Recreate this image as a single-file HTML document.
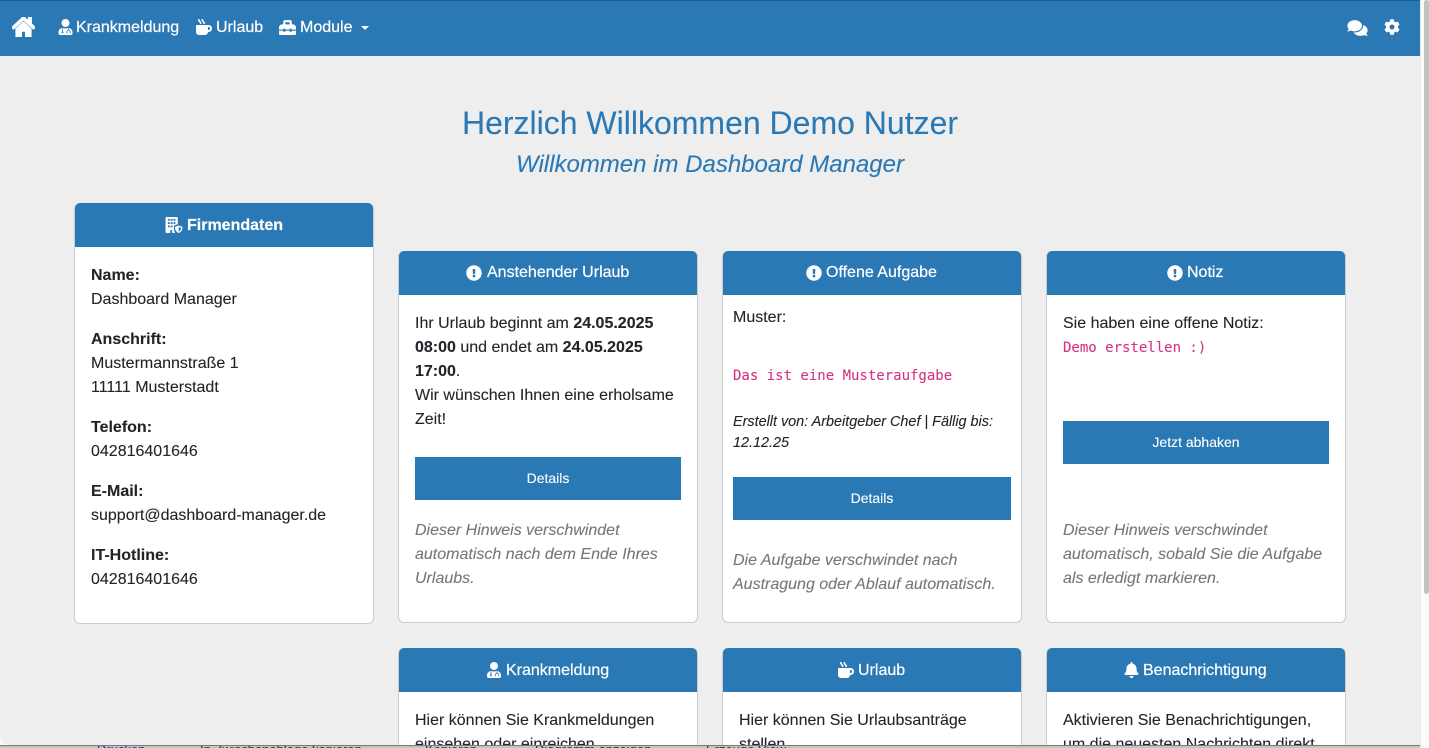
<!DOCTYPE html>
<html lang="de"><head><meta charset="utf-8"><title>Dashboard Manager</title>
<style>
*{box-sizing:border-box}
html,body{margin:0;padding:0;width:1429px;height:748px;overflow:hidden;background:#fafafa}
body{font-family:"Liberation Sans",sans-serif;font-size:16px;line-height:24px;color:#212529;position:relative;-webkit-text-stroke:.1px}
svg{fill:currentColor;display:block;position:absolute}
.win{position:absolute;left:0;top:0;width:1420px;height:745px;background:#eee;overflow:hidden;border-bottom-left-radius:10px}
.nav{position:absolute;left:0;top:0;width:1420px;height:56px;background:#2a79b5;border-top:1px solid #1a5f96;color:#fff;-webkit-text-stroke:.2px}
.nav span{position:absolute;top:15px;white-space:nowrap}
.nav svg{color:#fff}
h1,h2{position:absolute;left:0;width:1420px;text-align:center;color:#2a79b5;font-weight:400;margin:0}
h1{top:101px;font-size:32px;line-height:44px}
h2{top:150px;font-size:24px;line-height:30px;font-style:italic}
.card{position:absolute;width:300px;background:#fff;border:1px solid #ccc;border-radius:6px}
.hd{position:absolute;left:0;top:-1px;width:298px;height:44px;background:#2a79b5;color:#fff;text-align:center;line-height:44px;white-space:nowrap;border-radius:5px 5px 0 0;-webkit-text-stroke:.2px}
.hd svg{color:#fff}
.hd.d>*{transform:translate(0,1px)}
.t{position:absolute;white-space:nowrap}
.btn{position:absolute;background:#2a79b5;color:#fff;text-align:center;font-size:14px;height:43px;line-height:43px}
.m{font-family:"DejaVu Sans Mono","Liberation Mono",monospace;font-size:14px;color:#d63384}
.i{font-style:italic;color:#777}
.sm{font-style:italic;font-size:14.4px;line-height:21px;color:#212529}
.sb{position:absolute;left:1420px;top:0;width:9px;height:748px;background:#fafafa;border-left:1px solid #e8e8e8}
.th{position:absolute;left:1424px;top:0;width:5px;height:594px;background:#c2c2c2;border-radius:3px}
.under{position:absolute;left:0;top:745px;width:1429px;height:3px;background:#c4c4c4;border-top:1px solid #7a7a7a;overflow:hidden}
.under span{position:absolute;top:-4px;font-size:13px;line-height:16px;color:#333;white-space:nowrap}
</style></head><body>
<div class="under">
<span style="left:97px;color:#1c3f80">Drucken</span><span style="left:200px">In Zwischenablage kopieren</span><span style="left:425px">Kopieren</span><span style="left:535px">Diagramm anzeigen</span><span style="left:706px">Erzeuge View</span>
</div>
<div class="win">
<div class="nav">
<svg style="left:12px;top:16px;width:23px;height:20px" viewBox="0 32 576 448" preserveAspectRatio="none"><path stroke="#fff" stroke-width="22" d="M280.37 148.26L96 300.11V464a16 16 0 0 0 16 16l112.06-.29a16 16 0 0 0 15.92-16V368a16 16 0 0 1 16-16h64a16 16 0 0 1 16 16v95.64a16 16 0 0 0 16 16.05L464 480a16 16 0 0 0 16-16V300L295.67 148.26a12.19 12.19 0 0 0-15.3 0zM571.6 251.47L488 182.56V44.05a12 12 0 0 0-12-12h-56a12 12 0 0 0-12 12v72.61L318.47 43a48 48 0 0 0-61 0L4.34 251.47a12 12 0 0 0-1.6 16.9l25.5 31A12 12 0 0 0 45.15 301l235.22-193.74a12.19 12.19 0 0 1 15.3 0L530.9 301a12 12 0 0 0 16.9-1.6l25.5-31a12 12 0 0 0-1.7-16.93z"/></svg>
<svg style="left:58px;top:18px;width:15px;height:16px" viewBox="0 0 448 512"><path d="M224 256c70.7 0 128-57.3 128-128S294.7 0 224 0 96 57.3 96 128s57.3 128 128 128zm89.6 32h-16.7c-22.2 10.2-46.9 16-72.9 16s-50.6-5.8-72.9-16h-16.7C60.2 288 0 348.2 0 422.4V464c0 26.5 21.5 48 48 48h352c26.5 0 48-21.5 48-48v-41.6c0-74.2-60.2-134.4-134.4-134.4z"/><path d="M128 300v100M320 300v60" stroke="#2a79b5" stroke-width="26" fill="none"/><circle cx="128" cy="425" r="30" fill="#2a79b5"/><path d="M265 460v-45a55 55 0 0 1 110 0v45" stroke="#2a79b5" stroke-width="26" fill="none"/></svg>
<span style="left:76px">Krankmeldung</span>
<svg style="left:196px;top:18px;width:16px;height:16px" viewBox="0 0 512 512"><path d="M127.1 146.5c1.3 7.7 8 13.5 16 13.5h16.5c9.8 0 17.6-8.5 16.3-18-3.8-28.2-16.4-54.2-36.6-74.7-14.4-14.7-23.6-33.3-26.4-53.5C111.8 5.9 105 0 96.8 0H80.4C70.6 0 63 8.5 64.1 18c3.9 31.9 18 61.3 40.6 84.4 12 12.2 19.7 27.5 22.4 44.1zm112 0c1.3 7.7 8 13.5 16 13.5h16.5c9.8 0 17.6-8.5 16.3-18-3.8-28.2-16.4-54.2-36.6-74.7-14.4-14.7-23.6-33.3-26.4-53.5C223.8 5.9 217 0 208.8 0h-16.4c-9.8 0-17.5 8.5-16.3 18 3.9 31.9 18 61.3 40.6 84.4 12 12.2 19.7 27.5 22.4 44.1zM400 192H32c-17.7 0-32 14.3-32 32v192c0 53 43 96 96 96h192c53 0 96-43 96-96h16c61.8 0 112-50.2 112-112s-50.2-112-112-112zm0 160h-16v-96h16c26.5 0 48 21.5 48 48s-21.5 48-48 48z"/></svg>
<span style="left:216px">Urlaub</span>
<svg style="left:279px;top:18px;width:17px;height:17px" viewBox="0 0 512 512"><path d="M502.63 214.63l-45.25-45.25c-6-6-14.14-9.37-22.63-9.37H384V80c0-26.51-21.49-48-48-48H176c-26.51 0-48 21.49-48 48v80H77.25c-8.49 0-16.62 3.37-22.63 9.37L9.37 214.63c-6 6-9.37 14.14-9.37 22.63V320h128v-16c0-8.84 7.16-16 16-16h32c8.84 0 16 7.16 16 16v16h128v-16c0-8.84 7.16-16 16-16h32c8.84 0 16 7.16 16 16v16h128v-82.75c0-8.48-3.37-16.62-9.37-22.62zM320 160H192V96h128v64zm64 208c0 8.84-7.16 16-16 16h-32c-8.84 0-16-7.16-16-16v-16H192v16c0 8.84-7.16 16-16 16h-32c-8.84 0-16-7.16-16-16v-16H0v96c0 17.67 14.33 32 32 32h448c17.67 0 32-14.33 32-32v-96H384v16z"/></svg>
<span style="left:300px">Module</span>
<div style="position:absolute;left:361px;top:25px;width:0;height:0;border-left:4.5px solid transparent;border-right:4.5px solid transparent;border-top:4.5px solid #fff"></div>
<svg style="left:1347px;top:18px;width:21px;height:18px" viewBox="0 0 576 512"><path d="M416 192c0-88.4-93.1-160-208-160S0 103.6 0 192c0 34.3 14.1 65.9 38 92-13.4 30.2-35.5 54.2-35.8 54.5-2.2 2.3-2.8 5.7-1.5 8.7S4.8 352 8 352c36.6 0 66.9-12.3 88.7-25 32.2 15.7 70.3 25 111.3 25 114.9 0 208-71.6 208-160zm122 220c23.9-26 38-57.7 38-92 0-66.9-53.5-124.2-129.3-148.1.9 6.6 1.3 13.3 1.3 20.1 0 105.9-107.7 192-240 192-10.8 0-21.3-.8-31.7-1.9C207.8 439.6 281.8 480 368 480c41 0 79.1-9.2 111.3-25 21.8 12.7 52.1 25 88.7 25 3.2 0 6.1-1.9 7.3-4.8 1.3-2.9.7-6.3-1.5-8.7-.3-.3-22.4-24.2-35.8-54.5z"/></svg>
<svg style="left:1384px;top:18px;width:16px;height:16px" viewBox="0 0 512 512"><path d="M487.4 315.7l-42.6-24.6c4.3-23.2 4.3-47 0-70.2l42.6-24.6c4.9-2.8 7.1-8.6 5.5-14-11.1-35.6-30-67.8-54.7-94.6-3.8-4.1-10-5.1-14.8-2.3L380.8 110c-17.9-15.4-38.5-27.3-60.8-35.1V25.8c0-5.6-3.9-10.5-9.4-11.7-36.7-8.2-74.3-7.8-109.2 0-5.5 1.2-9.4 6.1-9.4 11.7V75c-22.2 7.9-42.8 19.8-60.8 35.1L88.7 85.5c-4.9-2.8-11-1.9-14.8 2.3-24.7 26.7-43.6 58.9-54.7 94.6-1.7 5.4.6 11.2 5.5 14L67.3 221c-4.3 23.2-4.3 47 0 70.2l-42.6 24.6c-4.9 2.8-7.1 8.6-5.5 14 11.1 35.6 30 67.8 54.7 94.6 3.8 4.1 10 5.1 14.8 2.3l42.6-24.6c17.9 15.4 38.5 27.3 60.8 35.1v49.2c0 5.6 3.9 10.5 9.4 11.7 36.7 8.2 74.3 7.8 109.2 0 5.5-1.2 9.4-6.1 9.4-11.7v-49.2c22.2-7.9 42.8-19.8 60.8-35.1l42.6 24.6c4.9 2.8 11 1.9 14.8-2.3 24.7-26.7 43.6-58.9 54.7-94.6 1.5-5.5-.7-11.3-5.6-14.1zM256 336c-44.1 0-80-35.9-80-80s35.9-80 80-80 80 35.9 80 80-35.9 80-80 80z"/></svg>
</div>

<h1>Herzlich Willkommen Demo Nutzer</h1>
<h2>Willkommen im Dashboard Manager</h2>

<!-- Firmendaten -->
<div class="card" style="left:74px;top:203px;height:421px">
<div class="hd d"><svg style="left:90px;top:13px;width:18px;height:16px" viewBox="0 0 18 17"><path d="M1 0h11a1 1 0 0 1 1 1v6.600L9 9.200V14l1.200 3H7v-3H5v3H1a1 1 0 0 1-1-1V1a1 1 0 0 1 1-1z"/><g fill="#2a79b5"><rect x="2.500" y="2" width="2" height="2"/><rect x="5.500" y="2" width="2" height="2"/><rect x="8.500" y="2" width="2" height="2"/><rect x="2.500" y="5.500" width="2" height="2"/><rect x="5.500" y="5.500" width="2" height="2"/><rect x="8.500" y="5.500" width="2" height="2"/><rect x="2.500" y="9" width="2" height="2"/><rect x="5.500" y="9" width="2" height="2"/></g><path d="M14 9l4 1.500c0 3.500-1.500 5.500-4 6.500-2.500-1-4-3-4-6.500z"/><path d="M14 10.500l2.500 1c-.2 2.200-1 3.400-2.500 4.200z" fill="#2a79b5"/></svg><b style="position:absolute;left:112px;top:0">Firmendaten</b></div>
<div class="t" style="left:16px;top:60px"><b>Name:</b><br>Dashboard Manager</div>
<div class="t" style="left:16px;top:124px"><b>Anschrift:</b><br>Mustermannstraße 1<br>11111 Musterstadt</div>
<div class="t" style="left:16px;top:212px"><b>Telefon:</b><br>042816401646</div>
<div class="t" style="left:16px;top:276px"><b>E-Mail:</b><br>support@dashboard-manager.de</div>
<div class="t" style="left:16px;top:340px"><b>IT-Hotline:</b><br>042816401646</div>
</div>

<!-- Anstehender Urlaub -->
<div class="card" style="left:398px;top:251px;height:372px">
<div class="hd"><svg style="left:67px;top:14px;width:16px;height:16px" viewBox="0 0 512 512"><path d="M504 256c0 136.997-111.043 248-248 248S8 392.997 8 256C8 119.083 119.043 8 256 8s248 111.083 248 248zm-248 50c-25.405 0-46 20.595-46 46s20.595 46 46 46 46-20.595 46-46-20.595-46-46-46zm-43.673-165.346l7.418 136c.347 6.364 5.609 11.346 11.982 11.346h48.546c6.373 0 11.635-4.982 11.982-11.346l7.418-136c.375-6.874-5.098-12.654-11.982-12.654h-63.383c-6.884 0-12.356 5.78-11.981 12.654z"/></svg><span style="position:absolute;left:88px;top:0">Anstehender Urlaub</span></div>
<div class="t" style="left:16px;top:60px">Ihr Urlaub beginnt am <b>24.05.2025</b><br><b>08:00</b> und endet am <b>24.05.2025</b><br><b>17:00</b>.<br>Wir wünschen Ihnen eine erholsame<br>Zeit!</div>
<div class="btn" style="left:16px;top:205px;width:266px">Details</div>
<div class="t i" style="left:16px;top:267px">Dieser Hinweis verschwindet<br>automatisch nach dem Ende Ihres<br>Urlaubs.</div>
</div>

<!-- Offene Aufgabe -->
<div class="card" style="left:722px;top:251px;height:372px">
<div class="hd"><svg style="left:83px;top:14px;width:16px;height:16px" viewBox="0 0 512 512"><path d="M504 256c0 136.997-111.043 248-248 248S8 392.997 8 256C8 119.083 119.043 8 256 8s248 111.083 248 248zm-248 50c-25.405 0-46 20.595-46 46s20.595 46 46 46 46-20.595 46-46-20.595-46-46-46zm-43.673-165.346l7.418 136c.347 6.364 5.609 11.346 11.982 11.346h48.546c6.373 0 11.635-4.982 11.982-11.346l7.418-136c.375-6.874-5.098-12.654-11.982-12.654h-63.383c-6.884 0-12.356 5.78-11.981 12.654z"/></svg><span style="position:absolute;left:103px;top:0">Offene Aufgabe</span></div>
<div class="t" style="left:10px;top:54px">Muster:</div>
<div class="t m" style="left:10px;top:112px">Das ist eine Musteraufgabe</div>
<div class="t sm" style="left:10px;top:160px">Erstellt von: Arbeitgeber Chef | Fällig bis:<br>12.12.25</div>
<div class="btn" style="left:10px;top:225px;width:278px">Details</div>
<div class="t i" style="left:10px;top:297px">Die Aufgabe verschwindet nach<br>Austragung oder Ablauf automatisch.</div>
</div>

<!-- Notiz -->
<div class="card" style="left:1046px;top:251px;height:372px">
<div class="hd"><svg style="left:120px;top:14px;width:16px;height:16px" viewBox="0 0 512 512"><path d="M504 256c0 136.997-111.043 248-248 248S8 392.997 8 256C8 119.083 119.043 8 256 8s248 111.083 248 248zm-248 50c-25.405 0-46 20.595-46 46s20.595 46 46 46 46-20.595 46-46-20.595-46-46-46zm-43.673-165.346l7.418 136c.347 6.364 5.609 11.346 11.982 11.346h48.546c6.373 0 11.635-4.982 11.982-11.346l7.418-136c.375-6.874-5.098-12.654-11.982-12.654h-63.383c-6.884 0-12.356 5.78-11.981 12.654z"/></svg><span style="position:absolute;left:140px;top:0">Notiz</span></div>
<div class="t" style="left:16px;top:60px">Sie haben eine offene Notiz:</div>
<div class="t m" style="left:16px;top:84px">Demo erstellen :)</div>
<div class="btn" style="left:16px;top:169px;width:266px">Jetzt abhaken</div>
<div class="t i" style="left:16px;top:267px">Dieser Hinweis verschwindet<br>automatisch, sobald Sie die Aufgabe<br>als erledigt markieren.</div>
</div>

<!-- Row 2 -->
<div class="card" style="left:398px;top:648px;height:200px">
<div class="hd d"><svg style="left:88px;top:13px;width:14px;height:16px" viewBox="0 0 448 512"><path d="M224 256c70.7 0 128-57.3 128-128S294.7 0 224 0 96 57.3 96 128s57.3 128 128 128zm89.6 32h-16.7c-22.2 10.2-46.9 16-72.9 16s-50.6-5.8-72.9-16h-16.7C60.2 288 0 348.2 0 422.4V464c0 26.5 21.5 48 48 48h352c26.5 0 48-21.5 48-48v-41.6c0-74.2-60.2-134.4-134.4-134.4z"/><path d="M128 300v100M320 300v60" stroke="#2a79b5" stroke-width="26" fill="none"/><circle cx="128" cy="425" r="30" fill="#2a79b5"/><path d="M265 460v-45a55 55 0 0 1 110 0v45" stroke="#2a79b5" stroke-width="26" fill="none"/></svg><span style="position:absolute;left:107px;top:0">Krankmeldung</span></div>
<div class="t" style="left:16px;top:60px">Hier können Sie Krankmeldungen<br>einsehen oder einreichen.</div>
</div>
<div class="card" style="left:722px;top:648px;height:200px">
<div class="hd d"><svg style="left:115px;top:13px;width:16px;height:16px" viewBox="0 0 512 512"><path d="M127.1 146.5c1.3 7.7 8 13.5 16 13.5h16.5c9.8 0 17.6-8.5 16.3-18-3.8-28.2-16.4-54.2-36.6-74.7-14.4-14.7-23.6-33.3-26.4-53.5C111.8 5.9 105 0 96.8 0H80.4C70.6 0 63 8.5 64.1 18c3.9 31.9 18 61.3 40.6 84.4 12 12.2 19.7 27.5 22.4 44.1zm112 0c1.3 7.7 8 13.5 16 13.5h16.5c9.8 0 17.6-8.5 16.3-18-3.8-28.2-16.4-54.2-36.6-74.7-14.4-14.7-23.6-33.3-26.4-53.5C223.8 5.9 217 0 208.8 0h-16.4c-9.8 0-17.5 8.5-16.3 18 3.9 31.9 18 61.3 40.6 84.4 12 12.2 19.7 27.5 22.4 44.1zM400 192H32c-17.7 0-32 14.3-32 32v192c0 53 43 96 96 96h192c53 0 96-43 96-96h16c61.8 0 112-50.2 112-112s-50.2-112-112-112zm0 160h-16v-96h16c26.5 0 48 21.5 48 48s-21.5 48-48 48z"/></svg><span style="position:absolute;left:135px;top:0">Urlaub</span></div>
<div class="t" style="left:16px;top:60px">Hier können Sie Urlaubsanträge<br>stellen.</div>
</div>
<div class="card" style="left:1046px;top:648px;height:200px">
<div class="hd d"><svg style="left:77px;top:13px;width:15px;height:16px" viewBox="0 0 448 512"><path d="M224 512c35.32 0 63.97-28.65 63.97-64H160.030c0 35.35 28.65 64 63.97 64zm215.39-149.71c-19.32-20.76-55.47-51.99-55.47-154.29 0-77.7-54.48-139.9-127.94-155.16V32c0-17.67-14.32-32-31.98-32s-31.98 14.33-31.98 32v20.84C118.56 68.1 64.08 130.3 64.08 208c0 102.3-36.15 133.53-55.47 154.29-6 6.45-8.66 14.16-8.61 21.71.11 16.4 12.98 32 32.1 32h383.8c19.12 0 32-15.6 32.1-32 .05-7.55-2.61-15.27-8.61-21.71z"/></svg><span style="position:absolute;left:96px;top:0">Benachrichtigung</span></div>
<div class="t" style="left:16px;top:60px">Aktivieren Sie Benachrichtigungen,<br>um die neuesten Nachrichten direkt</div>
</div>
</div>
<div class="sb"></div><div class="th"></div>
</body></html>
